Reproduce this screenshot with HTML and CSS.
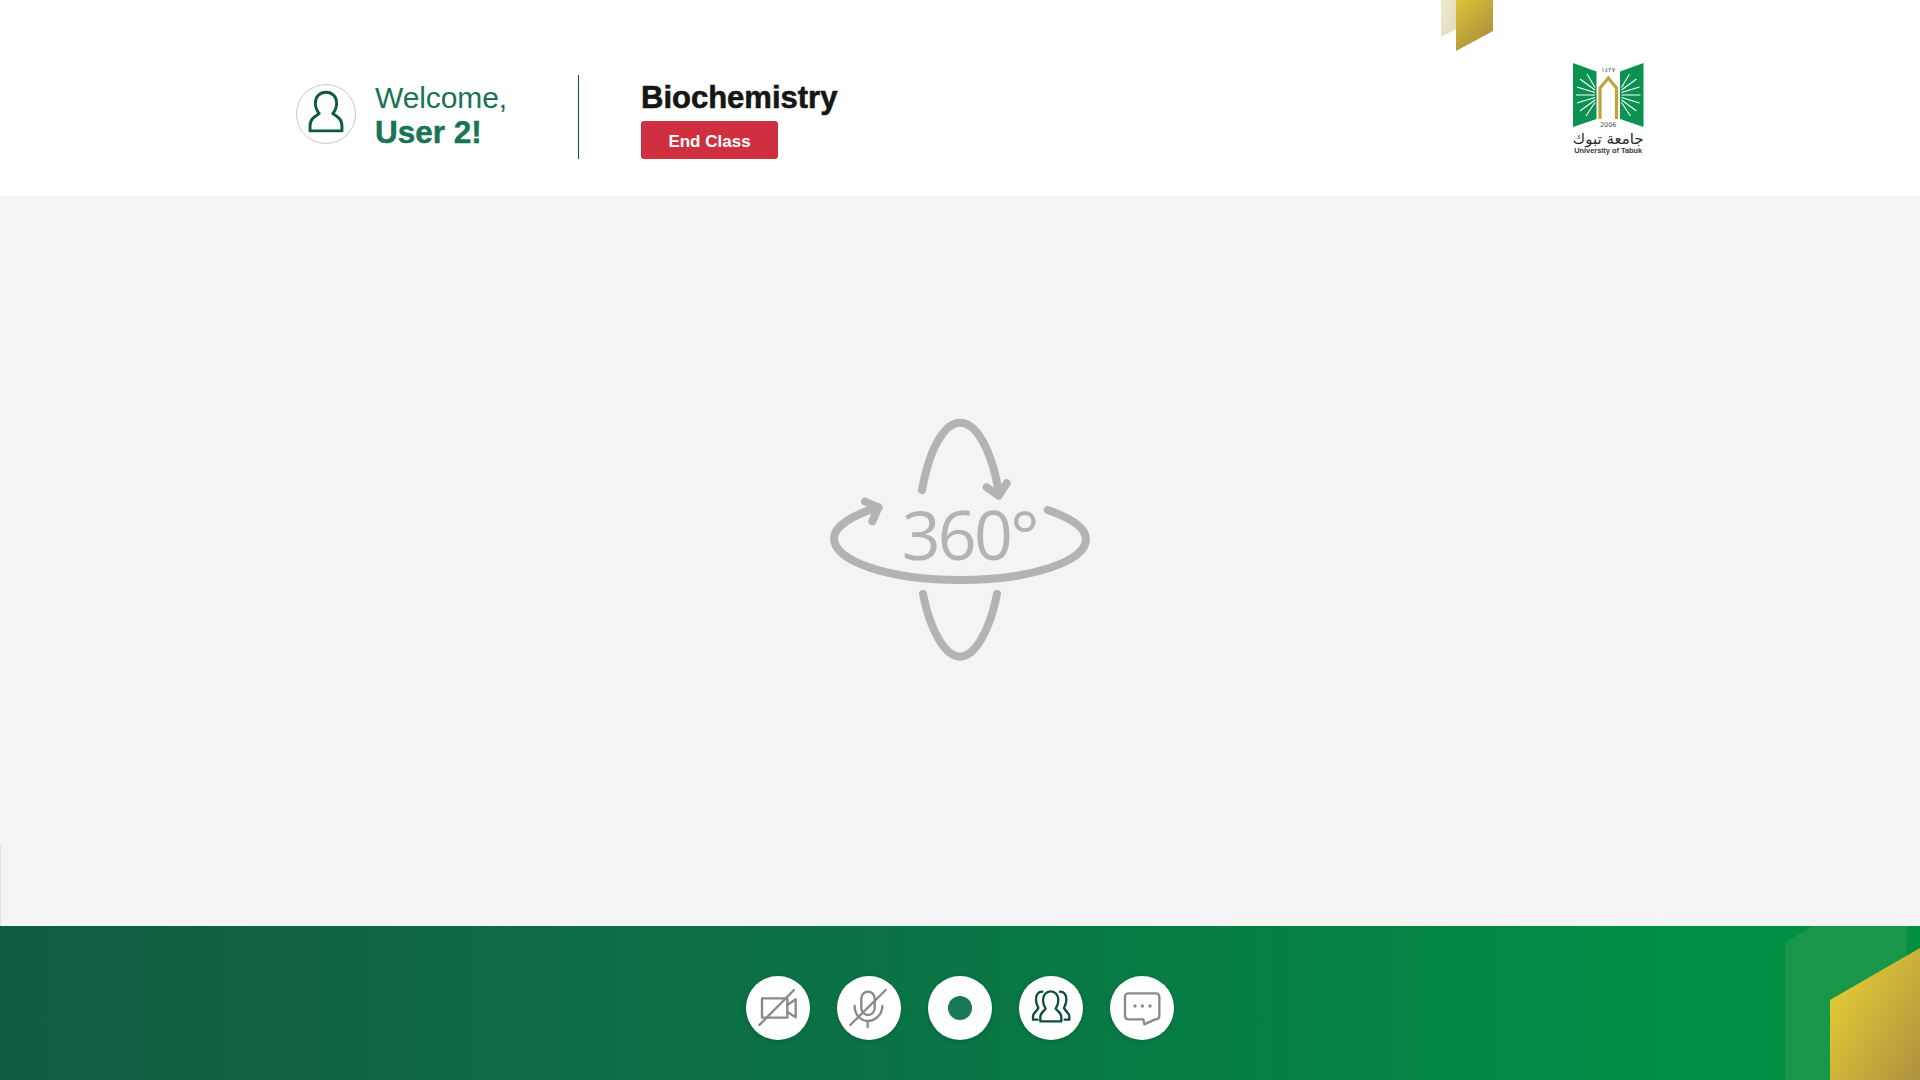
FILE: index.html
```html
<!DOCTYPE html>
<html lang="en">
<head>
<meta charset="utf-8">
<title>Biochemistry</title>
<link rel="stylesheet" href="styles.css">
</head>
<body>
<div class="page">
  <header class="header">
    <svg class="ribbon" viewBox="0 0 52 51" aria-hidden="true">
      <defs>
        <linearGradient id="gold" gradientUnits="userSpaceOnUse" x1="15" y1="0" x2="52" y2="40">
          <stop offset="0" stop-color="#dcc434"/>
          <stop offset="1" stop-color="#ab8d40"/>
        </linearGradient>
        <linearGradient id="pale" x1="0" y1="0" x2="1" y2="1">
          <stop offset="0" stop-color="#f1ebcb"/>
          <stop offset="1" stop-color="#e0d8c0"/>
        </linearGradient>
      </defs>
      <polygon points="0,0 15,0 15,29 0,37" fill="url(#pale)"/>
      <polygon points="15,0 52,0 52,31 15,51" fill="url(#gold)"/>
    </svg>
    <div class="left-group">
      <div class="user">
        <span class="avatar">
          <svg viewBox="0 0 60 60" class="avatar-icon" aria-hidden="true">
            <path d="M13.500 47.500 H46.500 V42 C46.500 35 41 32 37 29.500 C39.500 26.500 41 23 41 18.500 C41 12 36.500 7.500 30 7.500 C23.500 7.500 19 12 19 18.500 C19 23 20.500 26.500 23 29.500 C19 32 13.500 35 13.500 42 Z"/>
          </svg>
        </span>
        <div class="welcome">
          <div class="welcome-line">Welcome,</div>
          <div class="welcome-name">User 2!</div>
        </div>
      </div>
      <div class="divider"></div>
      <div class="course">
        <h1 class="course-title">Biochemistry</h1>
        <button class="end-btn">End Class</button>
      </div>
    </div>
    <svg class="logo" viewBox="0 0 71 92" role="img" aria-label="University of Tabuk">
      <polygon class="logo-green" points="0,0 23.500,8.500 23.500,56 0,64"/>
      <polygon class="logo-green" points="47,8.500 70.500,0 70.500,64 47,56"/>
      <g class="logo-rays">
        <path d="M22 32H3M22 29.500L4 24M22 34.500L4 40M22 27L7 16M22 37L7 48M22 24.500L14 11M22 39.500L13 53"/>
        <path d="M48.500 32H67.500M48.500 29.500L66.500 24M48.500 34.500L66.500 40M48.500 27L63.500 16M48.500 37L63.500 48M48.500 24.500L56.500 11M48.500 39.500L57.500 53"/>
      </g>
      <path class="logo-arch" d="M27 56V25L35.300 15L43.500 25V56"/>
      <text class="logo-small" x="35.200" y="8.500">١٤٢٧</text>
      <text class="logo-small" x="35.200" y="64">2006</text>
      <text class="logo-arabic" x="35.200" y="81" direction="rtl">جامعة تبوك</text>
      <text class="logo-en" x="35.200" y="90">University of Tabuk</text>
    </svg>
  </header>

  <main class="stage">
    <svg class="icon360" viewBox="0 0 900 840" role="img" aria-label="360 degrees">
      <g class="icon360-lines">
        <path d="M336 270 C360 140 405 68 450 68 C500 68 545 150 567 280"/>
        <path d="M530 262 L566 287 L590 250"/>
        <path d="M339 582 C360 690 405 770 450 770 C495 770 540 690 561 582"/>
        <path d="M713 330 C785 355 828 385 828 418 C828 485 660 540 450 540 C240 540 72 485 72 415 C72 380 125 345 205 322"/>
        <path d="M165 305 L205 322 L187 364"/>
      </g>
      <text class="icon360-text" x="275" y="480">360°</text>
    </svg>
  </main>

  <footer class="toolbar">
    <svg class="corner" viewBox="0 0 135 154" aria-hidden="true">
      <defs>
        <linearGradient id="gold2" x1="0.1" y1="0.2" x2="1" y2="1">
          <stop offset="0" stop-color="#e2cb35"/>
          <stop offset="1" stop-color="#ae9140"/>
        </linearGradient>
      </defs>
      <polygon points="0,17 27,0 122,0 122,154 0,154" fill="#19964a"/>
      <polygon points="45,74 135,22 135,154 45,154" fill="url(#gold2)"/>
    </svg>
    <button class="tool" aria-label="Camera off">
      <svg viewBox="0 0 192 192" class="tool-icon grey">
        <rect x="48" y="67" width="76" height="58"/>
        <path d="M124 87 L149 70 V124 L124 108"/>
        <path d="M40 147 L144 42"/>
      </svg>
    </button>
    <button class="tool" aria-label="Microphone off">
      <svg viewBox="0 0 192 192" class="tool-icon grey">
        <rect x="73" y="47" width="40" height="70" rx="20"/>
        <path d="M53 90 C53 120 75 135 92 135 C110 135 136 120 136 90"/>
        <path d="M92 135 V153"/>
        <path d="M40 147 L146 42"/>
      </svg>
    </button>
    <button class="tool" aria-label="Record"><span class="record-dot"></span></button>
    <button class="tool" aria-label="Participants">
      <svg viewBox="0 0 192 192" class="tool-icon dark">
        <path d="M64 136 H127 V122 C127 110 114 104 110 98 C116 90 118 80 118 72 C118 56 108 46 95 46 C82 46 72 56 72 72 C72 80 74 90 80 98 C76 104 64 110 64 122 Z"/>
        <path d="M70 47 C58 47 51 56 51 72 C51 80 55 90 58 96 C54 106 42 110 42 122 V131 H56"/>
        <path d="M123 47 C135 47 142 56 142 72 C142 80 138 90 135 96 C139 106 151 110 151 122 V131 H137"/>
      </svg>
    </button>
    <button class="tool" aria-label="Chat">
      <svg viewBox="0 0 192 192" class="tool-icon grey">
        <path d="M55 52 H138 a10 10 0 0 1 10 10 V120 a10 10 0 0 1 -10 10 H135 L103 145 L100 130 H55 a10 10 0 0 1 -10 -10 V62 a10 10 0 0 1 10 -10 Z"/>
        <circle class="chat-dot" cx="75" cy="90" r="5"/>
        <circle class="chat-dot" cx="97" cy="90" r="5"/>
        <circle class="chat-dot" cx="120" cy="90" r="5"/>
      </svg>
    </button>
  </footer>
</div>
</body>
</html>
```

FILE: styles.css
```css
* { box-sizing: border-box; }
html, body { margin: 0; padding: 0; }
body { font-family: "Liberation Sans", Arial, sans-serif; background: #fff; }

.page {
  width: 1920px;
  height: 1080px;
  display: flex;
  flex-direction: column;
  overflow: hidden;
}

.header {
  position: relative;
  height: 196px;
  flex: none;
  background: #fff;
  display: flex;
  align-items: flex-start;
  justify-content: space-between;
  padding: 75px 276px 0 296px;
}

.ribbon {
  position: absolute;
  left: 1441px;
  top: 0;
  width: 52px;
  height: 51px;
}

.left-group { display: flex; align-items: stretch; height: 84px; }

.user { display: flex; align-items: center; gap: 19px; width: 282px; padding-bottom: 7px; }

.avatar {
  width: 60px;
  height: 60px;
  border: 1px solid #c3cbc8;
  border-radius: 50%;
  flex: none;
  display: flex;
}
.avatar-icon { width: 100%; height: 100%; fill: none; stroke: #0f5a45; stroke-width: 3; stroke-linejoin: round; }

.welcome { color: #177455; font-size: 30px; line-height: 35px; position: relative; top: 1px; }
.welcome-line { letter-spacing: -0.1px; }
.welcome-name { font-weight: 700; font-size: 31.500px; -webkit-text-stroke: 0.5px #177455; }

.divider { width: 1px; background: #0f5440; margin-right: 62px; }

.course { display: flex; flex-direction: column; align-items: flex-start; }
.course-title {
  margin: 5px 0 5px;
  font-size: 31px;
  line-height: 36px;
  font-weight: 700;
  color: #161616;
  -webkit-text-stroke: 0.6px #161616;
}
.end-btn {
  width: 137px;
  height: 38px;
  border: 0;
  border-radius: 3px;
  background: #d02f3f;
  color: #fff;
  font: 700 17px "Liberation Sans", Arial, sans-serif;
  padding: 3px 0 0;
}

.logo { width: 71px; height: 92px; margin-top: -12px; flex: none; }
.logo-green { fill: #0b9250; }
.logo-rays { fill: none; stroke: #fff; stroke-width: 1.100; }
.logo-arch { fill: none; stroke: #c0a33b; stroke-width: 3.200; }
.logo-small { font: 6.500px "DejaVu Sans", sans-serif; fill: #555; text-anchor: middle; }
.logo-arabic { font: 400 15px "DejaVu Sans", sans-serif; fill: #2a2a2a; text-anchor: middle; }
.logo-en { font: 700 7.400px "Liberation Sans", sans-serif; fill: #3a3a3a; text-anchor: middle; }

.stage {
  position: relative;
  flex: 1;
  background: #f4f4f4;
  display: flex;
  align-items: center;
  justify-content: center;
  padding-bottom: 42px;
}
.stage::before {
  content: "";
  position: absolute;
  left: 0;
  bottom: 0;
  width: 1px;
  height: 81px;
  background: #e2e2e2;
}

.icon360 { width: 300px; height: 280px; }
.icon360-lines { fill: none; stroke: #b3b3b3; stroke-width: 24; stroke-linecap: round; stroke-linejoin: round; }
.icon360-text {
  font-family: "Open Sans", sans-serif;
  font-size: 204px;
  font-weight: 400;
  letter-spacing: -8px;
  fill: #b3b3b3;
}

.toolbar {
  position: relative;
  height: 154px;
  flex: none;
  background: linear-gradient(90deg, #125c42 0, #0a7546 50%, #008f43 88%, #008f43 100%);
  display: flex;
  align-items: center;
  justify-content: center;
  gap: 27px;
  padding-top: 10px;
}
.corner { position: absolute; right: 0; bottom: 0; width: 135px; height: 154px; }

.tool {
  width: 64px;
  height: 64px;
  padding: 0;
  border: 0;
  border-radius: 50%;
  background: #fff;
  box-shadow: 0 1px 4px rgba(0, 0, 0, .18);
  display: flex;
  align-items: center;
  justify-content: center;
}
.tool-icon { width: 64px; height: 64px; fill: none; stroke-width: 7; stroke-linecap: round; stroke-linejoin: round; }
.tool-icon.grey { stroke: #8a8a8a; }
.tool-icon.dark { stroke: #0f4d3d; }
.chat-dot { fill: #8a8a8a; stroke: none; }
.record-dot { width: 24px; height: 24px; border-radius: 50%; background: #177a55; }
```
